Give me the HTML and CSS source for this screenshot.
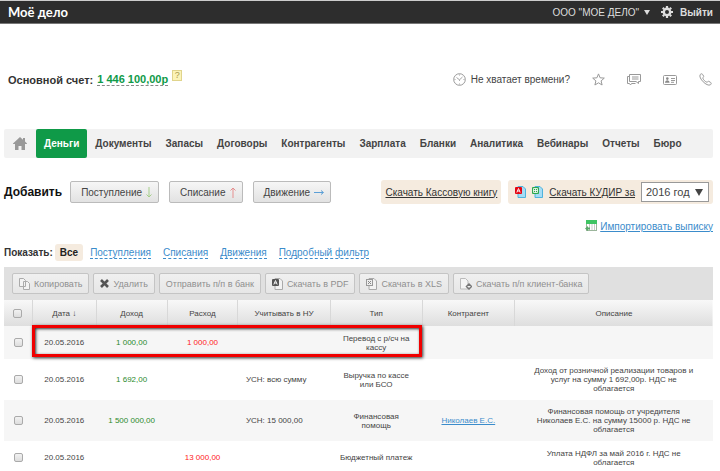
FILE: index.html
```html
<!DOCTYPE html>
<html lang="ru">
<head>
    <meta charset="utf-8">
    <title>Моё дело</title>
    <link rel="stylesheet" href="styles.css">
</head>
<body>
    <header class="topbar">
        <a class="logo" href="#">Моё дело</a>
        <div class="account">
            <button class="company" type="button">ООО "МОЕ ДЕЛО"
                <svg width="6" height="5" viewBox="0 0 6 5"><path d="M0 0h6L3 5z" fill="#ddd"/></svg>
            </button>
            <button class="icon-button" type="button" aria-label="Настройки">
                <svg width="12" height="12" viewBox="0 0 12 12">
                    <circle cx="6" cy="6" r="3.2" fill="none" stroke="#ddd" stroke-width="2.4"/>
                    <path d="M6 0v2M6 10v2M0 6h2M10 6h2M1.8 1.8l1.4 1.4M8.8 8.8l1.4 1.4M1.8 10.2l1.4-1.4M8.8 3.2l1.4-1.4" stroke="#ddd" stroke-width="2.2"/>
                </svg>
            </button>
            <a class="exit" href="#">Выйти</a>
        </div>
    </header>

    <div class="info">
        <div class="balance">
            <span>Основной счет:</span>
            <a class="sum" href="#">1 446 100,00р</a>
            <button class="help" type="button">?</button>
        </div>
        <div class="services">
            <a class="time" href="#">
                <svg width="13" height="13" viewBox="0 0 13 13" fill="none" stroke="#999">
                    <circle cx="6.5" cy="6.5" r="5.8"/>
                    <path d="M3.5 4.5l3 2.3 3-2.8M6.5 6.8v1M6.5 1.5v1M6.5 10.5v1M1.5 6.5h1M10.5 6.5h1" stroke-width=".9"/>
                </svg>
                Не хватает времени?
            </a>
            <a href="#" aria-label="Избранное">
                <svg width="13" height="13" viewBox="0 0 13 13" fill="none" stroke="#999"><path d="M6.5.9l1.6 3.9 4.2.3-3.2 2.8 1 4.1-3.6-2.2L2.9 12l1-4.1L.7 5.1l4.2-.3z"/></svg>
            </a>
            <a href="#" aria-label="Сообщения">
                <svg width="14" height="13" viewBox="0 0 14 13" fill="none" stroke="#999">
                    <path d="M2.5 1.5h11v7h-2v2l-2.5-2H2.5zM2.5 3.5h-2v7h2l1 1.5 1-1.5h4M5 4h6.5M5 6h6.5"/>
                </svg>
            </a>
            <a href="#" aria-label="Контакты">
                <svg width="14" height="10" viewBox="0 0 14 10" fill="none" stroke="#999">
                    <rect x=".5" y=".5" width="13" height="9" rx="1"/>
                    <circle cx="4.3" cy="3.6" r="1.3" fill="#888" stroke="none"/>
                    <path d="M2 7.7c0-3.4 4.6-3.4 4.6 0z" fill="#888" stroke="none"/>
                    <path d="M8 3.5h4M8 5.5h4M8 7.3h3"/>
                </svg>
            </a>
            <a href="#" aria-label="Телефон">
                <svg width="13" height="13" viewBox="0 0 13 13" fill="none" stroke="#999"><path d="M1.2 1.6C2 .6 3 .5 3.6 1.4l1 1.7c.4.8-.8 1.4-.8 2C4 6.5 6.5 9 7.9 9.2c.6 0 1.2-1.2 2-.8l1.7 1c.9.6.8 1.6-.2 2.4C8 14-1 5 1.2 1.6z"/></svg>
            </a>
        </div>
    </div>

    <nav class="menu">
        <a class="home" href="#" aria-label="Главная">
            <svg width="14" height="13" viewBox="0 0 14 13"><path d="M7 0l3 2.7V1h2v3.5L14 6.6V7h-2v6H8.5V9h-3v4H2V7H0v-.4z" fill="#999"/></svg>
        </a>
        <a class="active" href="#">Деньги</a>
        <a href="#">Документы</a>
        <a href="#">Запасы</a>
        <a href="#">Договоры</a>
        <a href="#">Контрагенты</a>
        <a href="#">Зарплата</a>
        <a href="#">Бланки</a>
        <a href="#">Аналитика</a>
        <a href="#">Вебинары</a>
        <a href="#">Отчеты</a>
        <a href="#">Бюро</a>
    </nav>

    <main class="content">
        <div class="actions">
            <h1>Добавить</h1>
            <button class="add" type="button">Поступление
                <svg width="6" height="11" viewBox="0 0 6 11" fill="none" stroke="#a5cf8a"><path d="M3 0v10M.5 7.5L3 10l2.5-2.5"/></svg>
            </button>
            <button class="add" type="button">Списание
                <svg width="6" height="11" viewBox="0 0 6 11" fill="none" stroke="#e58f8f"><path d="M3 11V1M.5 3.5L3 1l2.5 2.5"/></svg>
            </button>
            <button class="add" type="button">Движение
                <svg width="10" height="6" viewBox="0 0 10 6" fill="none" stroke="#5b9fd6"><path d="M0 3.5h9M7 1.5l2.5 2-2.5 2"/></svg>
            </button>
            <div class="downloads">
                <div class="panel"><a href="#">Скачать Кассовую книгу</a></div>
                <div class="panel kudir">
                    <svg width="11" height="12" viewBox="0 0 11 12">
                        <path d="M3 .5h5L10.5 3v8.500H3z" fill="#a5dcf5" stroke="#4fb3dd"/>
                        <rect y="1" width="7" height="7" rx="1" fill="#e30613"/>
                        <path d="M1.8 6.5l1.7-4 1.7 4M2.2 5h2.6" fill="none" stroke="#fff" stroke-width=".9"/>
                    </svg>
                    <svg width="11" height="12" viewBox="0 0 11 12">
                        <path d="M3 .5h5L10.5 3v8.500H3z" fill="#a5dcf5" stroke="#4fb3dd"/>
                        <rect y="1" width="7" height="7" rx="1" fill="#2fa84f"/>
                        <path d="M1.5 2.5h4v4h-4zM1.5 4.5h4M3.5 2.5v4" fill="none" stroke="#fff" stroke-width=".8"/>
                    </svg>
                    <a href="#">Скачать КУДИР за</a>
                    <div class="year">
                        <select aria-label="Год">
                            <option>2016 год</option>
                        </select>
                        <svg width="8" height="7" viewBox="0 0 8 7"><path d="M0 0h8L4 7z" fill="#444"/></svg>
                    </div>
                </div>
            </div>
        </div>

        <div class="import">
            <svg width="12" height="12" viewBox="0 0 12 12">
                <rect x="1.5" y=".5" width="10" height="10" fill="#fff" stroke="#9bb59b"/>
                <rect x="1" width="11" height="4" fill="#3fc463"/>
                <path d="M4.5 4v6M7 4v6M9.5 4v6" stroke="#bbb" stroke-width=".8"/>
                <path d="M0 8.5L3 6v1.5h2v2H3V11z" fill="#5aa96a"/>
            </svg>
            <a href="#">Импортировать выписку</a>
        </div>

        <div class="filters">
            <b>Показать:</b>
            <span class="current">Все</span>
            <a href="#">Поступления</a>
            <a href="#">Списания</a>
            <a href="#">Движения</a>
            <a href="#">Подробный фильтр</a>
        </div>

        <div class="toolbar">
            <button type="button">
                <svg width="11" height="12" viewBox="0 0 11 12" fill="#f2f2f2" stroke="#aaa"><path d="M.5.5h4l2 2v6h-6zM4.5 3.5h4l2 2v6h-6z"/></svg>
                Копировать
            </button>
            <button type="button">
                <svg width="9" height="9" viewBox="0 0 9 9" stroke="#555" stroke-width="2.6"><path d="M1 1l7 7M8 1L1 8"/></svg>
                Удалить
            </button>
            <button type="button">Отправить п/п в банк</button>
            <button type="button">
                <svg width="11" height="12" viewBox="0 0 11 12">
                    <path d="M3 .5h5L10.5 3v8.500H3z" fill="#f2f2f2" stroke="#aaa"/>
                    <rect y="1" width="7" height="7" rx="1" fill="#555"/>
                    <path d="M1.8 6.5l1.7-4 1.7 4M2.2 5h2.6" fill="none" stroke="#fff" stroke-width=".9"/>
                </svg>
                Скачать в PDF
            </button>
            <button type="button">
                <svg width="11" height="12" viewBox="0 0 11 12">
                    <path d="M3 .5h5L10.5 3v8.500H3z" fill="#f2f2f2" stroke="#aaa"/>
                    <rect x=".5" y="1.5" width="6" height="6" fill="#eee" stroke="#999"/>
                    <path d="M2 3l3 3M5 3L2 6" stroke="#888"/>
                </svg>
                Скачать в XLS
            </button>
            <button type="button">
                <svg width="12" height="12" viewBox="0 0 12 12">
                    <path d="M.5.5h5L8 3v8H.5z" fill="#f5f5f5" stroke="#bbb"/>
                    <path d="M9 6l2.5 2.5L9 11 6.5 8.5z" fill="#f2f2f2" stroke="#777" stroke-width="1.5"/>
                </svg>
                Скачать п/п клиент-банка
            </button>
        </div>

        <div class="operations">
            <table>
                <thead>
                    <tr>
                        <th class="col-check"><input type="checkbox" aria-label="Выбрать все"></th>
                        <th class="col-date">Дата ↓</th>
                        <th class="col-income">Доход</th>
                        <th class="col-expense">Расход</th>
                        <th class="col-tax">Учитывать в НУ</th>
                        <th class="col-type">Тип</th>
                        <th class="col-partner">Контрагент</th>
                        <th class="col-about">Описание</th>
                    </tr>
                </thead>
                <tbody>
                    <tr class="short">
                        <td><input type="checkbox" aria-label="Выбрать операцию 1"></td>
                        <td>20.05.2016</td>
                        <td class="income">1 000,00</td>
                        <td class="expense">1 000,00</td>
                        <td></td>
                        <td>Перевод с р/сч на кассу</td>
                        <td></td>
                        <td></td>
                    </tr>
                    <tr>
                        <td><input type="checkbox" aria-label="Выбрать операцию 2"></td>
                        <td>20.05.2016</td>
                        <td class="income">1 692,00</td>
                        <td></td>
                        <td class="tax">УСН: всю сумму</td>
                        <td>Выручка по кассе или БСО</td>
                        <td></td>
                        <td class="about">Доход от розничной реализации товаров и услуг на сумму 1 692,00р. НДС не облагается</td>
                    </tr>
                    <tr>
                        <td><input type="checkbox" aria-label="Выбрать операцию 3"></td>
                        <td>20.05.2016</td>
                        <td class="income">1 500 000,00</td>
                        <td></td>
                        <td class="tax">УСН: 15 000,00</td>
                        <td>Финансовая помощь</td>
                        <td><a href="#">Николаев Е.С.</a></td>
                        <td class="about">Финансовая помощь от учредителя Николаев Е.С. на сумму 15000 р. НДС не облагается</td>
                    </tr>
                    <tr class="short">
                        <td><input type="checkbox" aria-label="Выбрать операцию 4"></td>
                        <td>20.05.2016</td>
                        <td></td>
                        <td class="expense">13 000,00</td>
                        <td></td>
                        <td>Бюджетный платеж</td>
                        <td></td>
                        <td class="about">Уплата НДФЛ за май 2016 г. НДС не облагается</td>
                    </tr>
                </tbody>
            </table>
            <div class="highlight"></div>
        </div>
    </main>
</body>
</html>
```
FILE: styles.css
```css
* {
    box-sizing: border-box;
}

body {
    margin: 0;
    font-family: "Liberation Sans", Arial, sans-serif;
    font-size: 10px;
    color: #333;
    background-color: #fff;
    overflow: hidden;
}

button, select, input {
    font-family: inherit;
    font-size: inherit;
    margin: 0;
}

svg {
    flex: none;
}

.topbar {
    display: flex;
    justify-content: space-between;
    align-items: center;
    height: 24px;
    padding: 0 7px 0 8px;
    background-color: #2d2d2d;
    border-top: 1px solid #ccc;
    border-bottom: 1px solid #777;
}

.logo {
    color: #fff;
    font-family: Lato, sans-serif;
    font-size: 13px;
    font-weight: bold;
    text-decoration: none;
}

.account {
    display: flex;
    align-items: center;
    gap: 11px;
}

.account button {
    display: flex;
    align-items: center;
    gap: 5px;
    padding: 0;
    border: none;
    background: none;
    color: #ddd;
}

.exit {
    color: #ddd;
    font-weight: bold;
    text-decoration: none;
    margin-left: -4px;
}

.info {
    display: flex;
    justify-content: space-between;
    align-items: center;
    height: 105px;
    padding: 6px 8px 0 8px;
}

.balance {
    display: flex;
    align-items: center;
    gap: 4px;
    font-size: 11px;
    font-weight: bold;
}

.sum {
    color: #0f9a48;
    text-decoration: none;
    border-bottom: 1px dashed #888;
}

.help {
    width: 10px;
    height: 11px;
    padding: 0;
    border: 1px solid #e0d48c;
    background-color: #fbf3b8;
    color: #a89a50;
    font-size: 9px;
    line-height: 9px;
    margin-bottom: 8px;
}

.services {
    display: flex;
    align-items: center;
    gap: 22px;
}

.services a {
    display: flex;
    align-items: center;
    gap: 5px;
    color: #444;
    text-decoration: none;
}

.menu {
    display: flex;
    margin: 0 7px 0 4px;
    height: 29px;
    background-color: #f2f2f2;
    border-radius: 2px;
}

.menu a {
    display: flex;
    align-items: center;
    padding: 0 7px;
    color: #444;
    font-weight: bold;
    text-decoration: none;
}

.menu .home {
    padding: 0 9px;
}

.menu .active {
    padding: 0 8px;
    margin-right: 1px;
    color: #fff;
    background-color: #0f9a48;
    border-radius: 2px;
}

.content {
    padding: 0 7px 0 4px;
}

.actions {
    display: flex;
    align-items: center;
    gap: 10px;
    margin-top: 22px;
}

h1 {
    margin: 0 -2px 0 0;
    font-size: 12px;
    color: #111;
}

.add {
    display: flex;
    align-items: center;
    gap: 4px;
    height: 22px;
    padding: 0 6px 0 10px;
    color: #444;
    border: 1px solid #bbb;
    border-radius: 2px;
    background: linear-gradient(#f6f6f6, #e2e2e2);
}

.downloads {
    display: flex;
    gap: 7px;
    margin-left: auto;
}

.panel {
    display: flex;
    align-items: center;
    height: 24px;
    padding: 0 4px;
    background-color: #f5ebdf;
    border-radius: 3px;
}

.panel a {
    color: #333;
}

.kudir {
    gap: 6px;
    padding-left: 7px;
}

.year {
    position: relative;
}

.year select {
    width: 68px;
    height: 20px;
    padding: 0 4px;
    color: #444;
    font-size: 11px;
    border: 1px solid #999;
    border-radius: 0;
    background-color: #fff;
    appearance: none;
}

.year svg {
    position: absolute;
    top: 7px;
    right: 6px;
    pointer-events: none;
}

.import {
    display: flex;
    justify-content: flex-end;
    align-items: center;
    gap: 3px;
    margin-top: 16px;
}

.import a, td a {
    color: #3b8ccb;
}

.filters {
    display: flex;
    align-items: center;
    gap: 12px;
    margin: 12px 0 6px;
}

.filters b {
    margin-right: -10px;
}

.filters .current {
    padding: 3px 5px;
    margin-right: -5px;
    color: #222;
    font-weight: bold;
    background-color: #f5ebdf;
    border-radius: 3px;
}

.filters a {
    color: #3b8ccb;
    text-decoration: none;
    border-bottom: 1px dashed #3b8ccb;
}

.toolbar {
    display: flex;
    gap: 4px;
    padding: 6px 8px;
    background-color: #e0e0e0;
}

.toolbar button {
    display: flex;
    align-items: center;
    gap: 4px;
    height: 21px;
    padding: 0 6px;
    color: #8f8f8f;
    font-size: 9px;
    border: 1px solid #c4c4c4;
    border-radius: 2px;
    background: linear-gradient(#f0f0f0, #e6e6e6);
}

.operations {
    position: relative;
}

table {
    width: 100%;
    table-layout: fixed;
    border-collapse: collapse;
    font-size: 8px;
    line-height: 9px;
    color: #444;
    text-align: center;
}

thead tr {
    height: 26px;
    background: linear-gradient(#f8f8f8, #dedede);
}

th {
    padding: 0;
    font-weight: normal;
    border-right: 1px solid #d8d8d8;
}

th:last-child {
    border-right: none;
}

.col-check {
    width: 4%;
}

.col-date {
    width: 9%;
}

.col-income, .col-expense {
    width: 10%;
}

.col-tax, .col-type, .col-partner {
    width: 13%;
}

tbody tr {
    height: 41px;
}

tbody .short {
    height: 33px;
}

tbody tr:nth-child(odd) {
    background-color: #f6f6f6;
}

td {
    padding: 3px 8px;
}

.income {
    color: #2b8a2b;
}

.expense {
    color: #f22;
}

.tax {
    text-align: left;
}

.about {
    padding: 3px 17px;
}

input[type="checkbox"] {
    display: block;
    width: 9px;
    height: 9px;
    margin: 0 auto;
    border: 1px solid #aaa;
    border-radius: 2px;
    background: linear-gradient(#f2f2f2, #ddd);
    appearance: none;
}

/* рамка вокруг первой операции */
.highlight {
    position: absolute;
    top: 25px;
    left: 4%;
    width: 55%;
    height: 32px;
    border: 3px solid #f00000;
    box-shadow: 1px 1px 3px #333, inset 1px 1px 3px #333;
    pointer-events: none;
}
```
